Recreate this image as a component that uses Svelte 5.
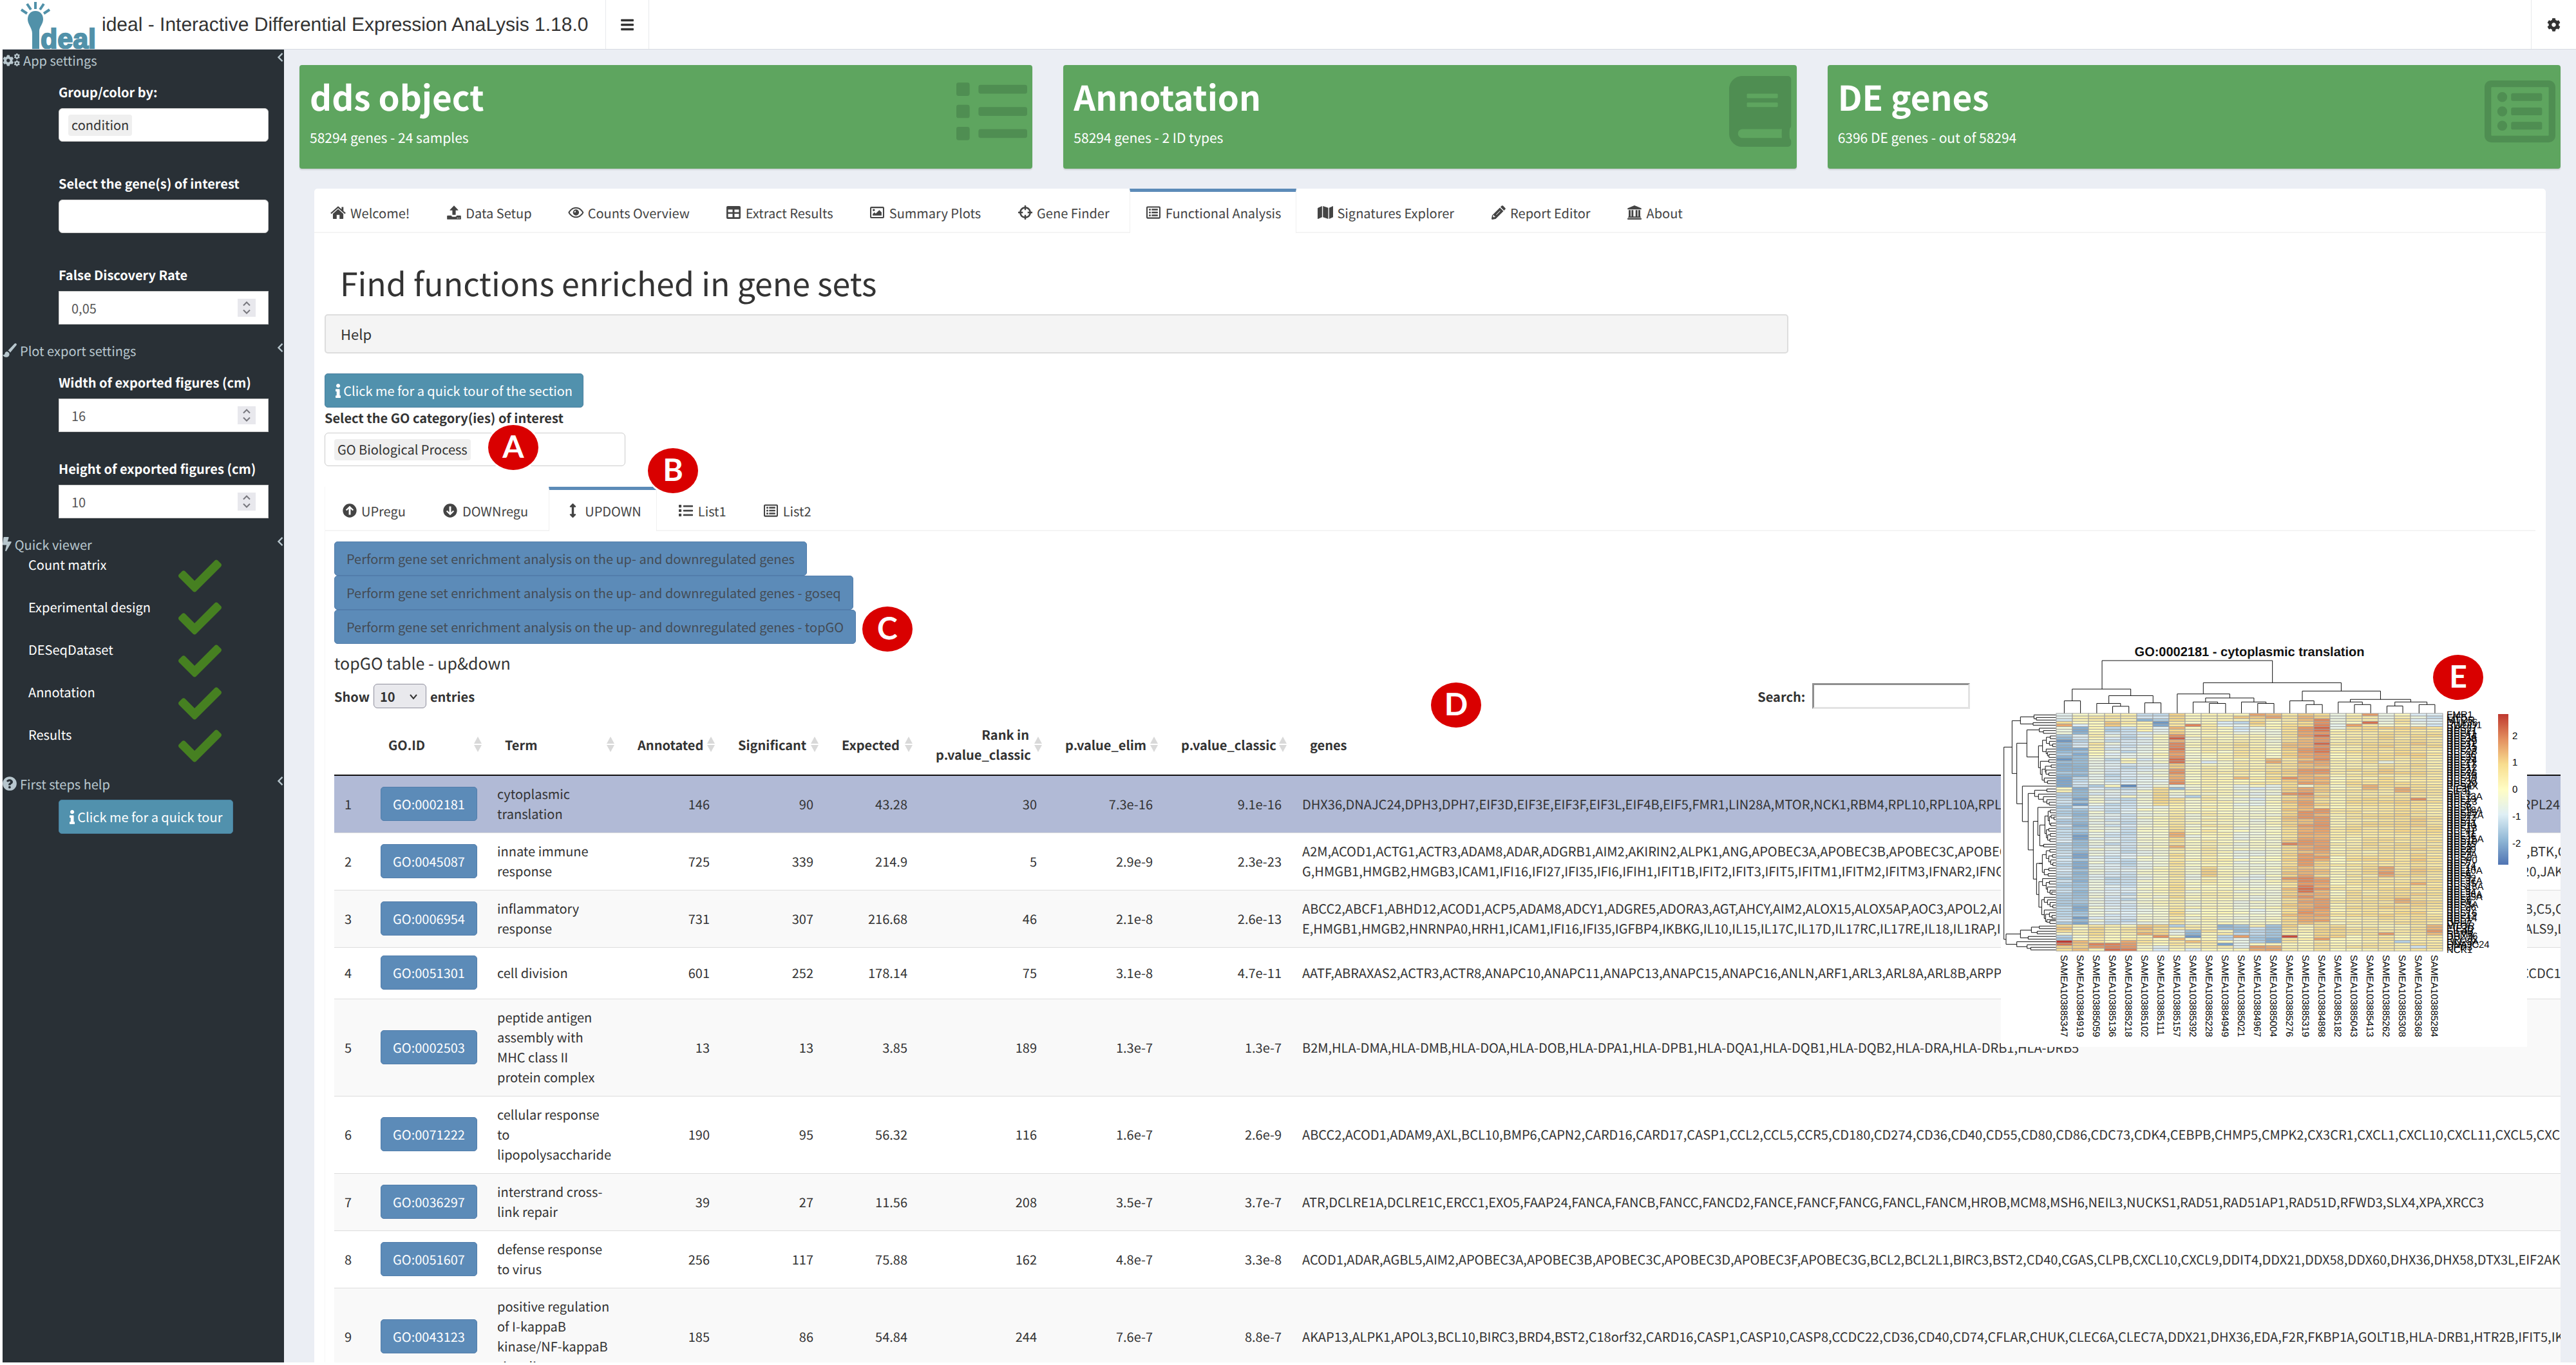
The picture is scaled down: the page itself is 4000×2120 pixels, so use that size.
<script>
  const cog = 'M487.4 315.7l-42.6-24.6c4.3-23.2 4.3-47 0-70.2l42.6-24.6c4.9-2.8 7.1-8.6 5.5-14-11.1-35.6-30-67.8-54.7-94.6-3.8-4.1-10-5.1-14.8-2.3L380.8 110c-17.9-15.4-38.5-27.3-60.8-35.1V25.8c0-5.6-3.9-10.5-9.4-11.7-36.7-8.2-74.3-7.8-109.2 0-5.5 1.2-9.4 6.1-9.4 11.7V75c-22.2 7.9-42.8 19.8-60.8 35.1L88.7 85.5c-4.9-2.8-11-1.9-14.8 2.3-24.7 26.7-43.6 58.9-54.7 94.6-1.7 5.4.6 11.2 5.5 14L67.3 221c-4.3 23.2-4.3 47 0 70.2l-42.6 24.6c-4.9 2.8-7.1 8.6-5.5 14 11.1 35.6 30 67.8 54.7 94.6 3.8 4.1 10 5.1 14.8 2.3l42.6-24.6c17.9 15.4 38.5 27.3 60.8 35.1v49.2c0 5.6 3.9 10.5 9.4 11.7 36.7 8.2 74.3 7.8 109.2 0 5.5-1.2 9.4-6.1 9.4-11.7v-49.2c22.2-7.9 42.8-19.8 60.8-35.1l42.6 24.6c4.9 2.8 11 1.9 14.8-2.3 24.7-26.7 43.6-58.9 54.7-94.6 1.5-5.5-.7-11.3-5.6-14.1zM256 336c-44.1 0-80-35.9-80-80s35.9-80 80-80 80 35.9 80 80-35.9 80-80 80z';
  const listAlt = 'M464 32H48C21 32 0 53 0 80v352c0 27 21 48 48 48h416c27 0 48-21 48-48V80c0-27-21-48-48-48zm-6 400H54c-3 0-6-3-6-6V86c0-3 3-6 6-6h404c3 0 6 3 6 6v340c0 3-3 6-6 6zM128 116a36 36 0 1 0 0 72a36 36 0 1 0 0-72zM128 220a36 36 0 1 0 0 72a36 36 0 1 0 0-72zM128 324a36 36 0 1 0 0 72a36 36 0 1 0 0-72zM204 124h200q12 0 12 12v32q0 12-12 12H204q-12 0-12-12v-32q0-12 12-12zM204 228h200q12 0 12 12v32q0 12-12 12H204q-12 0-12-12v-32q0-12 12-12zM204 332h200q12 0 12 12v32q0 12-12 12H204q-12 0-12-12v-32q0-12 12-12z';
  const list = 'M80 368H16a16 16 0 0 0-16 16v64a16 16 0 0 0 16 16h64a16 16 0 0 0 16-16v-64a16 16 0 0 0-16-16zm0-320H16A16 16 0 0 0 0 64v64a16 16 0 0 0 16 16h64a16 16 0 0 0 16-16V64a16 16 0 0 0-16-16zm0 160H16a16 16 0 0 0-16 16v64a16 16 0 0 0 16 16h64a16 16 0 0 0 16-16v-64a16 16 0 0 0-16-16zm416 176H176a16 16 0 0 0-16 16v32a16 16 0 0 0 16 16h320a16 16 0 0 0 16-16v-32a16 16 0 0 0-16-16zm0-320H176a16 16 0 0 0-16 16v32a16 16 0 0 0 16 16h320a16 16 0 0 0 16-16V80a16 16 0 0 0-16-16zm0 160H176a16 16 0 0 0-16 16v32a16 16 0 0 0 16 16h320a16 16 0 0 0 16-16v-32a16 16 0 0 0-16-16z';
  const icons = {
    cog: [512, cog],
    list: [512, list],
    listAlt: [512, listAlt],
    bars: [448, 'M20 60h408q16 0 16 16v48q0 16-16 16H20q-16 0-16-16V76q0-16 16-16zM20 216h408q16 0 16 16v48q0 16-16 16H20q-16 0-16-16v-48q0-16 16-16zM20 372h408q16 0 16 16v48q0 16-16 16H20q-16 0-16-16v-48q0-16 16-16z'],
    book: [448, 'M448 360V24c0-13.3-10.7-24-24-24H96C43 0 0 43 0 96v320c0 53 43 96 96 96h328c13.3 0 24-10.7 24-24v-16c0-7.5-3.5-14.3-8.9-18.7-4.2-15.4-4.2-59.3 0-74.7 5.4-4.3 8.9-11.1 8.9-18.6zM128 134c0-3.3 2.7-6 6-6h212c3.3 0 6 2.7 6 6v20c0 3.3-2.7 6-6 6H134c-3.3 0-6-2.7-6-6v-20zm0 64c0-3.3 2.7-6 6-6h212c3.3 0 6 2.7 6 6v20c0 3.3-2.7 6-6 6H134c-3.3 0-6-2.7-6-6v-20zm253.4 250H96c-17.7 0-32-14.3-32-32 0-17.6 14.4-32 32-32h285.4c-1.9 17.1-1.9 46.9 0 64z'],
    check: [512, 'M173.898 439.404l-166.4-166.4c-9.997-9.997-9.997-26.206 0-36.204l36.203-36.204c9.997-9.998 26.207-9.998 36.204 0L192 312.69 432.095 72.596c9.997-9.997 26.207-9.997 36.204 0l36.203 36.204c9.997 9.997 9.997 26.206 0 36.204l-294.4 294.401c-9.998 9.997-26.207 9.997-36.204-.001z'],
    bolt: [320, 'M296 160H180.6l42.6-129.8C227.2 15 215.7 0 200 0H56C44 0 33.8 8.9 32.2 20.8l-32 240C-1.7 275.2 9.5 288 24 288h118.7L96.6 482.5c-3.6 15.2 8 29.5 23.3 29.5 8.4 0 16.4-4.4 20.8-12l176-304c9.3-15.9-2.2-36-20.7-36z'],
    upDown: [256, 'M214.059 377.941H168V134.059h46.059c21.382 0 32.09-25.851 16.971-40.971L144.971 7.029c-9.373-9.373-24.568-9.373-33.941 0L24.971 93.088c-15.119 15.119-4.411 40.971 16.971 40.971H88v243.882H41.941c-21.382 0-32.09 25.851-16.971 40.971l86.059 86.059c9.373 9.373 24.568 9.373 33.941 0l86.059-86.059c15.12-15.119 4.412-40.971-16.97-40.971z'],
    info: [192, 'M20 424.229h20V279.771H20c-11.046 0-20-8.954-20-20V212c0-11.046 8.954-20 20-20h112c11.046 0 20 8.954 20 20v212.229h20c11.046 0 20 8.954 20 20V492c0 11.046-8.954 20-20 20H20c-11.046 0-20-8.954-20-20v-47.771c0-11.046 8.954-20 20-20zM96 0C56.235 0 24 32.235 24 72s32.235 72 72 72 72-32.235 72-72S135.764 0 96 0z'],
    home: [560, 'M280 30L4 272l34 38L280 98l242 212 34-38-84-74V56h-66v84zM92 300L280 136l188 164v170q0 16-16 16H332V346H228v140H108q-16 0-16-16z'],
    upload: [512, 'M256 4l150 160q8 14-8 16h-82v150q0 16-16 16h-88q-16 0-16-16V180h-82q-16-2-8-16zM24 366h136q8 44 48 46h96q40-2 48-46h136q20 2 20 22v100q0 20-20 20H24q-20 0-20-20V388q0-20 20-22zm340 74v32h30v-32zm60 0v32h30v-32z'],
    eye: [576, 'M288 62C150 62 50 166 8 256c42 90 142 194 280 194s238-104 280-194C526 166 426 62 288 62zm0 46c108 0 186 76 228 148-42 72-120 148-228 148S102 328 60 256c42-72 120-148 228-148zM288 146a110 110 0 1 0 0 220a110 110 0 1 0 0-220zm-10 44v60h-60c4-34 26-56 60-60z'],
    table: [512, 'M48 24h416q48 0 48 48v368q0 48-48 48H48q-48 0-48-48V72q0-48 48-48zM60 152v90h162V152zm230 0v90h162V152zM60 304v120h162V304zm230 0v120h162V304z'],
    image: [512, 'M48 48h416q48 0 48 48v320q0 48-48 48H48q-48 0-48-48V96q0-48 48-48zM48 96v320h416V96zM136 130a40 40 0 1 0 0 80a40 40 0 1 0 0-80zM96 368v-60l60-56 50 46 128-128 82 82v116z'],
    crosshairs: [512, 'M228 0h56v50C380 64 448 132 462 228h50v56h-50C448 380 380 448 284 462v50h-56v-50C132 448 64 380 50 284H0v-56h50C64 132 132 64 228 50zM228 108C166 120 120 166 108 228h62v56h-62c12 62 58 108 120 120v-62h56v62c62-12 108-58 120-120h-62v-56h62c-12-62-58-108-120-120v62h-56z'],
    map: [576, 'M0 116q0-20 18-28L160 24v400L18 486q-18 6-18-12zM192 24l192 66v398l-192-66zM416 88L558 26q18-6 18 12v358q0 20-18 28L416 488z'],
    pencil: [512, 'M498 142l-46 46L324 60l46-46q22-20 46 0l82 82q20 24 0 46zM302 82L22 362 0 484q0 28 28 26l122-22 280-280zM126 420l-50 10-26-26 10-50h34v38h38zm40-88l140-140 14 14-140 140z'],
    bank: [512, 'M256 0l250 104v40H6v-40zM48 168h68v232h32V168h68v232h80V168h68v232h32V168h68v232q22 2 22 40H26q0-38 22-40zM4 462h504v50H4z'],
    up: [512, 'M256 8a248 248 0 1 0 0 496a248 248 0 1 0 0-496zM256 88l142 138-36 36-72-70v214h-68V192l-72 70-36-36z'],
    down: [512, 'M256 8a248 248 0 1 0 0 496a248 248 0 1 0 0-496zM256 424l142-138-36-36-72 70V106h-68v214l-72-70-36 36z'],
    question: [512, 'M256 4a252 252 0 1 0 0 504a252 252 0 1 0 0-504zM250 98c-52 0-88 24-114 66l58 42c16-22 30-34 54-34 18 0 34 10 34 28 0 32-72 36-70 106v10h80c0-52 80-48 80-120 0-60-62-98-122-98zM254 344a44 44 0 1 0 0 88a44 44 0 1 0 0-88z'],
    brush: [512, 'M470 4c-18-4-32 4-44 18L196 268c36 14 64 40 78 76L498 76c24-34 6-66-28-72zM160 302c-60 4-74 48-82 86-10 38-46 32-74 24 12 64 68 96 130 96 72 0 120-52 112-122-10-46-44-76-86-84z'],
    chevron: [300, 'M220 60l44 44-150 152 150 152-44 44L24 256z']
  };

  const tabs = [
    ['home', 'Welcome!'], ['upload', 'Data Setup'], ['eye', 'Counts Overview'], ['table', 'Extract Results'],
    ['image', 'Summary Plots'], ['crosshairs', 'Gene Finder'], ['listAlt', 'Functional Analysis'],
    ['map', 'Signatures Explorer'], ['pencil', 'Report Editor'], ['bank', 'About']
  ];
  const subTabs = [['up', 'UPregu'], ['down', 'DOWNregu'], ['upDown', 'UPDOWN'], ['list', 'List1'], ['listAlt', 'List2']];
  const boxes = [
    ['dds object', '58294 genes - 24 samples', 'list'],
    ['Annotation', '58294 genes - 2 ID types', 'book'],
    ['DE genes', '6396 DE genes - out of 58294', 'listAlt']
  ];
  const checks = ['Count matrix', 'Experimental design', 'DESeqDataset', 'Annotation', 'Results'];
  const analysis = 'Perform gene set enrichment analysis on the up- and downregulated genes';
  const actions = [analysis, analysis + ' - goseq', analysis + ' - topGO'];
  const columns = ['', 'GO.ID', 'Term', 'Annotated', 'Significant', 'Expected', 'Rank in\np.value_classic', 'p.value_elim', 'p.value_classic', 'genes'];

  const rows = [
    ['GO:0002181', 'cytoplasmic\ntranslation', '146', '90', '43.28', '30', '7.3e-16', '9.1e-16', 'DHX36,DNAJC24,DPH3,DPH7,EIF3D,EIF3E,EIF3F,EIF3L,EIF4B,EIF5,FMR1,LIN28A,MTOR,NCK1,RBM4,RPL10,RPL10A,RPL11,RPL12,RPL13,RPL13A,RPL14,RPL15,RPL17,RPL18,RPL18A,RPL19,RPL3,RPL22,RPL23,RPL24,RPL26,RPL27'],
    ['GO:0045087', 'innate immune\nresponse', '725', '339', '214.9', '5', '2.9e-9', '2.3e-23', 'A2M,ACOD1,ACTG1,ACTR3,ADAM8,ADAR,ADGRB1,AIM2,AKIRIN2,ALPK1,ANG,APOBEC3A,APOBEC3B,APOBEC3C,APOBEC3D,APOBEC3F,APOBEC3G,APPL2,ARG1,ATG12,BCL10,BCL2L1,BIRC3,BMP6,BPIFB1,BST2,BTK,C1QA,C1QB\nG,HMGB1,HMGB2,HMGB3,ICAM1,IFI16,IFI27,IFI35,IFI6,IFIH1,IFIT1B,IFIT2,IFIT3,IFIT5,IFITM1,IFITM2,IFITM3,IFNAR2,IFNGR1,IFNGR2,IL12RB1,IL18R1,IL18RAP,IL1RAP,IL1RL2,IL27,IRAK2,IRF1,IRF5,IRF7,ISG15,ISG20,JAK2,KLRD1'],
    ['GO:0006954', 'inflammatory\nresponse', '731', '307', '216.68', '46', '2.1e-8', '2.6e-13', 'ABCC2,ABCF1,ABHD12,ACOD1,ACP5,ADAM8,ADCY1,ADGRE5,ADORA3,AGT,AHCY,AIM2,ALOX15,ALOX5AP,AOC3,APOL2,APOL3,APPL2,BCL6,BCR,BDKRB1,BDKRB2,BIRC3,BMP2,BMP6,BST1,BTK,C3,C3AR1,C4A,C4B,C5,C5AR1\nE,HMGB1,HMGB2,HNRNPA0,HRH1,ICAM1,IFI16,IFI35,IGFBP4,IKBKG,IL10,IL15,IL17C,IL17D,IL17RC,IL17RE,IL18,IL1RAP,IL1RL2,IL1RN,IL22RA1,IL27,IL36A,IL4R,IL6,IRAK2,IRF5,ITGAL,JAK2,JAM3,KIT,KNG1,LBP,LGALS9,LIAS,LTA'],
    ['GO:0051301', 'cell division', '601', '252', '178.14', '75', '3.1e-8', '4.7e-11', 'AATF,ABRAXAS2,ACTR3,ACTR8,ANAPC10,ANAPC11,ANAPC13,ANAPC15,ANAPC16,ANLN,ARF1,ARL3,ARL8A,ARL8B,ARPP19,ASPM,AURKA,AURKB,BABAM1,BCR,BIRC5,BORA,BRCA2,BUB1,BUB1B,CALM1,CALM2,CCDC124,CCNA1'],
    ['GO:0002503', 'peptide antigen\nassembly with\nMHC class II\nprotein complex', '13', '13', '3.85', '189', '1.3e-7', '1.3e-7', 'B2M,HLA-DMA,HLA-DMB,HLA-DOA,HLA-DOB,HLA-DPA1,HLA-DPB1,HLA-DQA1,HLA-DQB1,HLA-DQB2,HLA-DRA,HLA-DRB1,HLA-DRB5'],
    ['GO:0071222', 'cellular response\nto\nlipopolysaccharide', '190', '95', '56.32', '116', '1.6e-7', '2.6e-9', 'ABCC2,ACOD1,ADAM9,AXL,BCL10,BMP6,CAPN2,CARD16,CARD17,CASP1,CCL2,CCL5,CCR5,CD180,CD274,CD36,CD40,CD55,CD80,CD86,CDC73,CDK4,CEBPB,CHMP5,CMPK2,CX3CR1,CXCL1,CXCL10,CXCL11,CXCL5,CXCL8,CXCL9,DAB2IP'],
    ['GO:0036297', 'interstrand cross-\nlink repair', '39', '27', '11.56', '208', '3.5e-7', '3.7e-7', 'ATR,DCLRE1A,DCLRE1C,ERCC1,EXO5,FAAP24,FANCA,FANCB,FANCC,FANCD2,FANCE,FANCF,FANCG,FANCL,FANCM,HROB,MCM8,MSH6,NEIL3,NUCKS1,RAD51,RAD51AP1,RAD51D,RFWD3,SLX4,XPA,XRCC3'],
    ['GO:0051607', 'defense response\nto virus', '256', '117', '75.88', '162', '4.8e-7', '3.3e-8', 'ACOD1,ADAR,AGBL5,AIM2,APOBEC3A,APOBEC3B,APOBEC3C,APOBEC3D,APOBEC3F,APOBEC3G,BCL2,BCL2L1,BIRC3,BST2,CD40,CGAS,CLPB,CXCL10,CXCL9,DDIT4,DDX21,DDX58,DDX60,DHX36,DHX58,DTX3L,EIF2AK2,ELMOD2,EXOSC4'],
    ['GO:0043123', 'positive regulation\nof I-kappaB\nkinase/NF-kappaB\nsignaling', '185', '86', '54.84', '244', '7.6e-7', '8.8e-7', 'AKAP13,ALPK1,APOL3,BCL10,BIRC3,BRD4,BST2,C18orf32,CARD16,CASP1,CASP10,CASP8,CCDC22,CD36,CD40,CD74,CFLAR,CHUK,CLEC6A,CLEC7A,DDX21,DHX36,EDA,F2R,FKBP1A,GOLT1B,HLA-DRB1,HTR2B,IFIT5,IKBKE,IL12,IRAK1']
  ];

  /* Heatmap data: a base value per sample, with ranges of rows that differ. */
  const samples = ['5347', '4919', '5059', '5136', '5218', '5102', '5111', '5157', '5392', '5228', '4949', '5021', '4967', '5004', '5276', '5319', '4898', '5182', '5043', '5413', '5262', '5308', '5368', '5284'];
  const base = [-1.3, -1.9, -0.6, -1, -1.1, -0.4, -0.2, 0.6, -0.2, 0.2, 0, -0.4, -0.4, -0.2, 0.9, 1.5, 1.5, 0.2, 0.5, 0.6, 0.7, 0.7, 0.8, 0.5];
  const areas = [
    [0, 0, 2, -0.9], [0, 3, 3, 0.8], [0, 4, 4, 1.6], [0, 5, 7, -0.6], [0, 8, 27, -1.9], [0, 27, 27, -2.2], [0, 28, 29, -0.1], [0, 80, 82, 0.8], [0, 84, 85, -1.4], [0, 86, 86, 3], [0, 87, 87, 1.9], [0, 88, 89, 0.8],
    [1, 0, 3, 0.1], [1, 4, 4, -0.7], [1, 5, 7, -2.2], [1, 8, 12, -1.2], [1, 24, 27, -1], [1, 35, 35, -0.7], [1, 80, 85, 0], [1, 86, 89, 1.2],
    [2, 0, 15, 0.2], [2, 27, 27, -1.7], [2, 80, 86, 0.6], [2, 87, 88, 1.9], [2, 89, 89, 0.5],
    [3, 0, 2, 0.3], [3, 3, 4, 1.3], [3, 5, 6, -1.3], [3, 7, 20, -0.9], [3, 27, 27, 0.1], [3, 80, 86, 0.3], [3, 87, 89, 2],
    [4, 0, 4, 0.4], [4, 17, 18, 0], [4, 27, 27, -2.2], [4, 31, 31, 0], [4, 80, 85, 0.3], [4, 86, 87, 1.4], [4, 88, 89, 2],
    [5, 0, 2, -1], [5, 2, 2, -1.8], [5, 3, 6, 0.1], [5, 7, 27, -0.8], [5, 80, 83, 1.2], [5, 84, 87, 0.5],
    [6, 0, 2, -1.3], [6, 3, 4, -2], [6, 5, 7, -0.7], [6, 19, 26, -0.4], [6, 28, 34, 0.8], [6, 80, 83, 0.9], [6, 84, 84, 1.8], [6, 88, 89, -0.7],
    [7, 0, 2, 1], [7, 5, 7, 1.1], [7, 8, 26, 1.6], [7, 9, 9, 2.1], [7, 13, 13, 2.3], [7, 17, 18, 2.1], [7, 19, 20, 1.2], [7, 27, 27, -0.2], [7, 28, 28, -1.5], [7, 29, 31, -0.5], [7, 45, 46, 1.5], [7, 50, 50, 1.3], [7, 80, 80, -1.3], [7, 82, 83, -0.9], [7, 85, 85, 1.5],
    [8, 4, 4, 1.9], [8, 31, 31, -1.4], [8, 82, 84, -2], [8, 86, 86, 1.2], [8, 89, 89, -0.8],
    [9, 18, 18, -1], [9, 58, 61, 1], [10, 80, 81, -1.6], [10, 84, 85, -1.4], [10, 87, 87, -2.2], [10, 3, 4, -0.7],
    [11, 1, 1, 1.2], [11, 3, 6, -1], [11, 8, 26, 0.4], [11, 24, 24, 1.4], [11, 80, 83, -1.6], [11, 84, 84, 1.5], [11, 85, 88, -0.8],
    [12, 0, 0, 1.9], [12, 1, 4, 0.8], [12, 8, 27, 0.3], [12, 28, 33, -0.8], [12, 81, 86, -1.4], [12, 88, 89, 1.5],
    [13, 0, 1, 1.5], [13, 17, 18, 1.4], [13, 19, 26, 0.7], [13, 27, 28, -0.7], [13, 80, 86, -1.8], [13, 88, 89, 1.6],
    [14, 24, 24, 1.8], [14, 30, 30, 2], [14, 49, 49, 2], [14, 62, 62, 1.7], [14, 80, 81, 0.9], [14, 84, 84, 2.4], [14, 86, 89, 0.3],
    [15, 0, 4, 1.1], [15, 27, 27, 0.1], [15, 30, 30, 2.4], [15, 62, 67, 1.9], [15, 80, 89, 0.1],
    [16, 0, 1, 1.2], [16, 2, 17, 1.9], [16, 27, 35, 0.9], [16, 56, 61, 1], [16, 79, 84, 0.9], [16, 85, 85, 1.8],
    [17, 0, 5, -0.5], [17, 80, 84, 1], [18, 4, 4, 1.3], [19, 0, 0, 1.6], [19, 3, 3, 2], [19, 27, 28, 1.4], [20, 0, 4, -0.6], [20, 18, 18, -0.7], [20, 58, 61, 1.5], [20, 83, 83, 1.4],
    [21, 28, 29, 1.5], [21, 70, 71, 1.3], [21, 86, 86, -1.5], [22, 0, 4, -0.8], [22, 32, 32, 1.8], [22, 64, 64, 1.7], [22, 88, 88, -1.3],
    [23, 0, 4, -1], [23, 80, 83, 1.4], [23, 84, 89, 0.5]
  ];
  const stops = [[72, 116, 176], [143, 182, 212], [222, 238, 246], [253, 250, 192], [245, 216, 138], [226, 142, 94], [190, 56, 47]];
  let seed = 7;
  function noise() {
    seed = (seed * 16807) % 2147483647;
    return seed / 2147483647 - 0.5;
  }
  function colour(v) {
    const t = Math.max(0, Math.min(5.999, (v + 2.8) / 5.6 * 6));
    const i = Math.floor(t);
    const f = t - i;
    return 'rgb(' + stops[i].map((a, k) => Math.round(a + (stops[i + 1][k] - a) * f)).join(',') + ')';
  }
  const grid = [];
  for (let r = 0; r < 90; r++) {
    const rowShift = noise() * 0.3;
    for (let c = 0; c < 24; c++) {
      let v = base[c];
      if (r < 5 || r > 79) v = v * 0.3 + 0.2;
      for (const a of areas) if (a[0] === c && r >= a[1] && r <= a[2]) v = a[3];
      grid.push({ x: 86 + c * 25, y: 128 + r * 4.1, fill: colour(v + rowShift + noise() * 0.6) });
    }
  }
  const geneLabels = ['FMR1', 'EIF5', 'MTOR', 'DHX36', 'RWDD1', 'RPS27', 'RPS21', 'RPL41', 'RPS14', 'RPL38', 'RPS29', 'RPL31', 'RPS15', 'RPL23', 'RPS28', 'RPL36', 'RPL35', 'RPS24', 'RPL21', 'RPL17', 'RPS12', 'RPL27', 'RPS26', 'RPL39', 'RPS19', 'RPL30', 'RPS20', 'RPS4X', 'EIF3F', 'EIF3L', 'RPL3', 'RPL13A', 'RPL19', 'RPS23', 'RPL5', 'RPS8', 'RPL18A', 'RPS25', 'RPS27A', 'RPL22', 'RPS17', 'RPS11', 'RPL10', 'RPS13', 'RPL41', 'RPL11', 'RPL36', 'RPS15A', 'RPS10', 'RPL15', 'RPS3', 'RPL29', 'RPS9', 'RPL7A', 'RPS2', 'RPLP0', 'RPS7', 'RPL24', 'RPL14', 'RPL10A', 'RPL6', 'RPS5', 'RPL32', 'RPL37A', 'RPL35', 'RPS18A', 'RPL8', 'RPL34', 'RPL36A', 'RPL35A', 'RPS6', 'RPL4', 'RPS3A', 'RPL26', 'RPL9', 'RPS16', 'RPL12', 'RPS14', 'RPL7', 'DPH7', 'MTOR', 'EIF3D', 'EIF4B', 'RBM4', 'DHX36', 'RPL26', 'LIN28A', 'DNAJC24', 'DPH3', 'NCK1'];

  /* Sample tree: height, then x and end height of both branches. */
  const sampleTree = [
    [103, 312, 202, 763, 180], [202, 233, 243, 388, 225], [243, 212, 288, 255, 288], [225, 330, 252, 447, 250], [252, 298, 288, 361, 262],
    [262, 340, 288, 383, 288], [250, 425, 288, 468, 288], [180, 580, 219, 945, 209], [219, 511, 288, 650, 233], [233, 586, 247, 714, 247],
    [247, 553, 288, 618, 252], [252, 596, 288, 639, 288], [247, 681, 288, 746, 252], [252, 724, 288, 767, 288], [209, 842, 243, 1049, 238],
    [243, 809, 288, 873, 256], [256, 852, 288, 895, 288], [238, 969, 247, 1129, 247], [247, 937, 288, 1001, 256], [256, 980, 288, 1023, 288],
    [247, 1087, 261, 1172, 256], [261, 1066, 288, 1108, 288], [256, 1151, 288, 1193, 288]
  ];
  /* Gene tree: x, then y and end x of both branches. */
  const geneTree = [
    [2, 181, 40, 1077, 12], [40, 58, 79, 304, 62], [79, 40, 142, 73, 138], [142, 31, 245, 49, 153], [153, 43, 245, 55, 245], [138, 67, 245, 79, 245],
    [62, 163, 109, 445, 88], [109, 101, 167, 227, 163], [167, 93, 245, 110, 186], [186, 104, 245, 117, 245], [163, 175, 182, 277, 172],
    [182, 149, 200, 202, 199], [200, 135, 218, 164, 214], [218, 129, 245, 142, 245], [214, 154, 245, 172, 229], [229, 166, 245, 179, 245],
    [199, 190, 245, 212, 205], [205, 203, 245, 222, 212], [212, 215, 245, 229, 245], [172, 247, 211, 308, 180], [211, 240, 245, 252, 245],
    [180, 284, 195, 335, 190], [195, 270, 222, 298, 198], [222, 264, 245, 276, 245], [198, 288, 245, 307, 211], [211, 301, 245, 313, 245],
    [190, 325, 245, 345, 205], [205, 338, 245, 351, 245], [88, 363, 245, 528, 115], [115, 397, 145, 660, 139], [145, 382, 202, 411, 163],
    [202, 376, 245, 389, 245], [163, 400, 245, 424, 186], [186, 412, 245, 437, 202], [202, 426, 245, 445, 213], [213, 438, 245, 451, 245],
    [139, 527, 160, 796, 154], [160, 462, 245, 592, 169], [169, 544, 193, 641, 172], [172, 641, 187, 641, 187], [187, 634, 245, 646, 245],
    [193, 502, 208, 584, 200], [208, 480, 218, 524, 214], [218, 474, 245, 487, 245], [214, 505, 222, 541, 220], [222, 498, 245, 511, 235], [235, 507, 245, 519, 245],
    [220, 535, 245, 548, 245], [200, 566, 211, 604, 206], [211, 560, 245, 573, 245], [206, 590, 218, 615, 216], [218, 584, 245, 597, 245], [216, 609, 245, 621, 245],
    [154, 723, 165, 868, 165], [165, 723, 181, 723, 181], [181, 682, 199, 765, 190], [199, 664, 216, 700, 211], [216, 658, 245, 670, 245], [211, 688, 228, 716, 220],
    [228, 682, 245, 694, 245], [220, 707, 245, 728, 230], [230, 720, 245, 733, 245], [190, 751, 211, 776, 208], [211, 745, 245, 757, 245], [208, 770, 245, 782, 245],
    [165, 808, 182, 927, 178], [182, 794, 245, 826, 199], [199, 812, 214, 843, 205], [214, 806, 245, 819, 245], [205, 833, 245, 858, 217], [217, 848, 245, 866, 225],
    [225, 856, 245, 868, 245], [178, 892, 190, 962, 190], [190, 881, 245, 904, 205], [205, 893, 245, 915, 217], [217, 905, 245, 924, 230], [230, 917, 245, 930, 245],
    [190, 940, 245, 980, 196], [196, 960, 214, 994, 202], [214, 953, 245, 972, 226], [226, 965, 245, 978, 245], [202, 985, 245, 997, 216], [216, 990, 245, 1003, 245],
    [12, 1052, 79, 1100, 62], [79, 1034, 130, 1070, 115], [130, 1020, 167, 1045, 157], [167, 1015, 245, 1027, 245], [157, 1039, 245, 1051, 245],
    [115, 1063, 245, 1076, 245], [62, 1088, 245, 1111, 110], [110, 1102, 245, 1119, 127], [127, 1114, 245, 1126, 245]
  ];
  const sampleTreePath = sampleTree.map((b) => `M${b[1]} ${b[2]}V${b[0]}H${b[3]}V${b[4]}`).join('');
  const geneTreePath = geneTree.map((b) => `M${b[2]} ${b[1]}H${b[0]}V${b[3]}H${b[4]}`).join('');
  const ticks = [[2, 163], [1, 204], [0, 246], [-1, 288], [-2, 330]];
</script>

{#snippet icon(name)}
  <svg class="icon" viewBox="0 0 {icons[name][0]} 512" aria-hidden="true"><path fill-rule="evenodd" d={icons[name][1]} /></svg>
{/snippet}

{#snippet section(iconName, title)}
  <a class="section" href="#top">
    <span class="section-icon">{@render icon(iconName)}</span>{title}
    <span class="chev">{@render icon('chevron')}</span>
  </a>
{/snippet}

{#snippet number(id, label, value)}
  <div class="group">
    <label for={id}>{label}</label>
    <div class="field square">
      <input {id} type="text" inputmode="decimal" {value} />
      <span class="spin" aria-hidden="true">
        <svg viewBox="0 0 28 28"><path d="M9 10.500l5-5 5 5M9 17.500l5 5 5-5" /></svg>
      </span>
    </div>
  </div>
{/snippet}

<div class="app">
  <header>
    <div class="brand">
      <svg class="logo" viewBox="0 0 122 76" aria-label="ideal logo">
        <g fill="none" stroke="#5191a9" stroke-width="4">
          <path d="M24 3v11M11 6l6 9M37 6l-6 9M2 15l9 6M46 15l-9 6" />
        </g>
        <path fill="#5191a9" d="M24 17c-8 0-12 6-12 13 0 8 7 13 7 22v24h11V48c0-6 6-11 6-18 0-7-4-13-12-13z" />
        <text x="32" y="75" class="logo-text">deal</text>
      </svg>
      <span class="title">ideal - Interactive Differential Expression AnaLysis 1.18.0</span>
    </div>
    <button class="head-btn" aria-label="Toggle sidebar">{@render icon('bars')}</button>
    <button class="head-btn gear" aria-label="Settings">{@render icon('cog')}</button>
  </header>

  <div class="body">
    <aside>
      <a class="section" href="#top">
        <svg class="cogs" viewBox="0 0 700 512" aria-hidden="true">
          <g transform="translate(0 60) scale(.86)"><path d={cog} /></g>
          <g transform="translate(440 0) scale(.46)"><path d={cog} /></g>
          <g transform="translate(440 270) scale(.46)"><path d={cog} /></g>
        </svg>App settings
        <span class="chev">{@render icon('chevron')}</span>
      </a>
      <div class="form">
        <div class="group">
          <label for="group-by">Group/color by:</label>
          <div class="field"><span class="chip">condition</span><input id="group-by" type="text" /></div>
        </div>
        <div class="group">
          <label for="genes">Select the gene(s) of interest</label>
          <div class="field"><input id="genes" type="text" /></div>
        </div>
        {@render number('fdr', 'False Discovery Rate', '0,05')}
      </div>
      {@render section('brush', 'Plot export settings')}
      <div class="form tight">
        {@render number('fig-width', 'Width of exported figures (cm)', '16')}
        {@render number('fig-height', 'Height of exported figures (cm)', '10')}
      </div>
      {@render section('bolt', 'Quick viewer')}
      <ul class="checks">
        {#each checks as name}
          <li><span>{name}</span>{@render icon('check')}</li>
        {/each}
      </ul>
      {@render section('question', 'First steps help')}
      <button class="btn teal tour">{@render icon('info')}Click me for a quick tour</button>
    </aside>

    <main>
      <div class="boxes">
        {#each boxes as [title, text, ic]}
          <section class="box">
            <div><h3>{title}</h3><p>{text}</p></div>
            {@render icon(ic)}
          </section>
        {/each}
      </div>

      <div class="panel">
        <nav class="tabs top">
          {#each tabs as [ic, name]}
            <a href="#top" class:active={name === 'Functional Analysis'}><span class="fw">{@render icon(ic)}</span>{name}</a>
          {/each}
        </nav>
        <div class="pane">
          <h1>Find functions enriched in gene sets</h1>
          <button class="help">Help</button>
          <button class="btn teal">{@render icon('info')}Click me for a quick tour of the section</button>
          <label class="go-label" for="go">Select the GO category(ies) of interest</label>
          <div class="go">
            <div class="field bordered"><span class="chip">GO Biological Process</span><input id="go" type="text" /></div>
            <span class="badge a">A</span>
          </div>

          <div class="inner">
            <nav class="tabs sub">
              {#each subTabs as [ic, name]}
                <a href="#top" class:active={name === 'UPDOWN'}><span class="fw">{@render icon(ic)}</span>{name}</a>
              {/each}
              <span class="badge b">B</span>
            </nav>
            <div class="inner-pane">
              <div class="actions">
                {#each actions as text}
                  <button class="btn blue">{text}</button>
                {/each}
                <span class="badge c">C</span>
              </div>
              <h4>topGO table - up&amp;down</h4>
              <div class="controls">
                <label>Show <span class="select"><select><option>10</option><option>25</option></select><svg viewBox="0 0 14 10" aria-hidden="true"><path d="M2 2l5 6 5-6" /></svg></span> entries</label>
                <label>Search: <input class="search" type="search" /></label>
              </div>
              <div class="table-wrap">
                <table>
                  <colgroup><col class="w0" /><col class="w1" /><col class="w2" /><col class="w3" /><col class="w4" /><col class="w5" /><col class="w6" /><col class="w7" /><col class="w8" /><col /></colgroup>
                  <thead>
                    <tr>
                      {#each columns as name, i}
                        <th class:num={i > 2 && i < 9}>{name}{#if i > 0 && i < 9}<svg class="sort" viewBox="0 0 12 24" aria-hidden="true"><path d="M6 0l6 11H0zM6 24l6-11H0z" /></svg>{/if}</th>
                      {/each}
                    </tr>
                  </thead>
                  <tbody>
                    {#each rows as row, i}
                      <tr class:picked={i === 0}>
                        <td>{i + 1}</td>
                        <td><a class="btn blue id" href="#top">{row[0]}</a></td>
                        <td>{row[1]}</td>
                        {#each row.slice(2, 8) as value}<td class="num">{value}</td>{/each}
                        <td class="genes">{row[8]}</td>
                      </tr>
                    {/each}
                  </tbody>
                </table>
              </div>

              <svg class="heatmap" width="817" height="646" viewBox="0 0 817 646" role="img" aria-label="Heatmap of GO:0002181">
                <defs>
                  <linearGradient id="scale" x1="0" y1="1" x2="0" y2="0">
                    {#each ['#4f74b3', '#91b8d6', '#dfeff5', '#fffdc4', '#f8dd8f', '#e38f5f', '#bf382f'] as stop, i}
                      <stop offset={i / 6} stop-color={stop} />
                    {/each}
                  </linearGradient>
                </defs>
                <rect width="817" height="646" fill="#fff" />
                <text class="plot-title" x="386" y="39" text-anchor="middle">GO:0002181 - cytoplasmic translation</text>
                <g class="tree" transform="translate(-26 0) scale(.5867 .4464)"><path d={sampleTreePath} /></g>
                <g class="tree" transform="translate(4 120) scale(.3333)"><path d={geneTreePath} /></g>
                <g class="cells">
                  {#each grid as cell}<rect x={cell.x} y={cell.y} width="25" height="4.1" fill={cell.fill} />{/each}
                </g>
                {#each geneLabels as name, i}<text class="plot-label" x="692" y={135 + i * 4.1}>{name}</text>{/each}
                {#each samples as name, i}<text class="plot-label" transform="translate({93 + i * 25} 503) rotate(90)">SAMEA10388{name}</text>{/each}
                <rect x="772" y="129" width="16" height="234" fill="url(#scale)" />
                {#each ticks as [name, y]}<text class="plot-label" x="794" y={y + 5}>{name}</text>{/each}
              </svg>
              <span class="badge d">D</span>
              <span class="badge e">E</span>
            </div>
          </div>
        </div>
      </div>
    </main>
  </div>
</div>

<style>
  :global(body) { background: #fff; }
  .app, .app * { box-sizing: border-box; }
  .app {
    height: 100vh; padding: 0 0 4px 4px; overflow: hidden; display: flex; flex-direction: column;
    font: 20px/31px "Noto Sans CJK JP", "Open Sans", sans-serif; color: #333; text-rendering: geometricPrecision;
  }
  button, input, select { font: inherit; color: inherit; }
  a { color: inherit; text-decoration: none; }
  .icon { height: 22px; fill: currentColor; flex: none; display: block; }
  h1, h3, h4, p, ul { margin: 0; padding: 0; font-weight: 400; }

  header { height: 77px; flex: none; display: flex; border-bottom: 1px solid #d8dbe2; background: #fff; }
  .brand { width: 936px; padding-left: 27px; display: flex; align-items: flex-start; }
  .logo { width: 122px; height: 76px; flex: none; }
  .logo-text { font: bold 43px "Liberation Sans", Arial, sans-serif; fill: #5191a9; stroke: #5191a9; stroke-width: 2px; }
  .title { margin-left: 5px; font: 30px/78px "Liberation Sans", Arial, sans-serif; white-space: nowrap; }
  .head-btn { width: 68px; border: 0; border-left: 1px solid #e8e9ec; border-right: 1px solid #e8e9ec; background: none; display: flex; align-items: center; justify-content: center; padding: 0; }
  .head-btn .icon { height: 23px; }
  .head-btn.gear { margin-left: auto; width: 70px; border-right: 0; }
  .head-btn.gear .icon { height: 21px; }

  .body { flex: 1; min-height: 0; display: flex; }
  aside { width: 437px; flex: none; background: #293036; color: #fff; }
  .section { height: 32px; margin-top: 24px; display: flex; align-items: center; color: #b8c7ce; }
  .section:first-child { margin-top: 0; }
  .checks + .section { margin-top: 10px; }
  .section-icon { margin-right: 5px; }
  .cogs { width: 28px; height: 22px; margin-right: 4px; fill: currentColor; }
  .chev { margin-left: auto; align-self: flex-start; padding-top: 3px; }
  .chev .icon { height: 18px; }
  .form { padding: 18px 24px 0 87px; display: flex; flex-direction: column; gap: 49px; }
  .form.tight { gap: 41px; }
  .group { display: flex; flex-direction: column; gap: 10px; }
  label { font-weight: 700; }
  .field { height: 52px; border: 1px solid #ccc; border-radius: 6px; background: #fff; color: #333; display: flex; align-items: center; padding: 0 14px; }
  .field.square { border-radius: 0; padding: 0 19px; color: #555; }
  .field input { flex: 1; min-width: 0; width: 0; border: 0; padding: 0; background: none; outline: 0; height: 100%; }
  .chip { background: #efefef; border-radius: 4px; padding: 0 5px; height: 33px; line-height: 32px; white-space: nowrap; }
  .spin { width: 28px; height: 28px; background: #e8e8ed; }
  .spin svg { display: block; fill: none; stroke: #77777d; stroke-width: 2; }
  .checks { list-style: none; padding: 0 97px 0 40px; }
  .checks li { height: 66px; display: flex; justify-content: space-between; }
  .checks .icon { height: 67px; width: 67px; fill: #468021; }

  .btn { display: inline-flex; align-items: center; height: 53px; padding: 0 20px; border: 1px solid; border-radius: 5px; white-space: nowrap; }
  .teal { background: #5191ad; border-color: #487f9e; color: #fff; gap: 4px; padding: 0 16px; }
  .blue { background: #5c8bb8; border-color: #527dab; color: #444c55; padding: 0 18px; }
  .id { color: #fff; width: 150px; justify-content: center; padding: 0; }
  .tour { margin: 9px 0 0 87px; }

  main { flex: 1; min-width: 0; background: #ebeef4; padding: 24px 24px 0; overflow: hidden; }
  .boxes { display: flex; gap: 48px; }
  .box { flex: 1; height: 161px; border-radius: 4px; background: #5ea55f; color: #fff; display: flex; justify-content: space-between; align-items: flex-start; padding: 17px 7px 0 16px; box-shadow: 0 2px 2px rgba(0, 0, 0, .12); }
  .box h3 { font-size: 53px; line-height: 64px; font-weight: 700; }
  .box p { font-size: 21px; margin-top: 17px; }
  .box .icon { height: 110px; fill: #4f8e52; margin-right: 1px; }

  .panel { margin: 31px 23px 0; background: #fff; border-radius: 5px 5px 0 0; }
  .tabs { height: 69px; display: flex; gap: 8px; border-bottom: 2px solid #f4f4f4; }
  .tabs.top { gap: 7px; }
  .tabs a { display: flex; align-items: center; height: 69px; padding: 5px 23px 0; gap: 5px; color: #444; border-left: 1px solid transparent; border-right: 1px solid transparent; white-space: nowrap; }
  .tabs a.active { border-top: 5px solid #5c8bb8; padding-top: 0; border-left-color: #f0f0f0; border-right-color: #f0f0f0; background: #fff; }
  .fw { width: 27px; display: flex; justify-content: center; }
  .pane { padding: 49px 16px 0; display: flex; flex-direction: column; align-items: flex-start; }
  h1 { font-size: 50px; line-height: 56px; margin: 0 0 21px 24px; }
  .help { width: calc(66.667% - 16px); height: 61px; background: #f4f4f4; border: 2px solid #ddd; border-radius: 5px; text-align: left; padding: 0 23px; font-size: 22px; margin-bottom: 31px; }
  .go-label { margin-bottom: 8px; }
  .go { width: 467px; position: relative; margin-bottom: 32px; }
  .inner { align-self: stretch; border-left: 1px solid #f7f7f7; }
  .sub { position: relative; }
  .inner-pane { padding: 16px 15px 0 14px; position: relative; }
  .actions { display: flex; flex-direction: column; align-items: flex-start; position: relative; }
  h4 { font-size: 25px; line-height: 31px; margin-top: 15px; }
  .controls { margin-top: 15px; width: calc(75% - 12px); height: 40px; display: flex; justify-content: space-between; align-items: center; }
  .controls label { display: flex; align-items: center; gap: 6px; }
  .controls label + label { gap: 11px; }
  .select { position: relative; display: flex; }
  .select svg { position: absolute; right: 13px; top: 15px; width: 14px; fill: none; stroke: #333; stroke-width: 2; }
  select { appearance: none; width: 82px; height: 38px; border: 1px solid #8f8f9d; border-radius: 6px; background: #e9e9ed; padding: 0 9px; font-weight: 700; }
  .search { width: 245px; height: 40px; border: 3px solid; border-color: #8f8f8f #e3e3e3 #e3e3e3 #8f8f8f; background: #fff; padding: 0 4px; }

  .table-wrap { margin: 8px -54px 0 0; overflow: hidden; }
  table { width: 100%; table-layout: fixed; border-collapse: separate; border-spacing: 0; }
  .w0 { width: 56px; } .w1 { width: 181px; } .w2 { width: 206px; } .w3 { width: 156px; } .w4 { width: 161px; }
  .w5 { width: 146px; } .w6 { width: 201px; } .w7 { width: 180px; } .w8 { width: 200px; }
  th { position: relative; text-align: left; padding: 16px 28px; border-bottom: 2px solid #111; white-space: pre; font-weight: 700; }
  .num { text-align: right; }
  .sort { position: absolute; right: 8px; top: 35px; width: 12px; height: 24px; fill: #d9d9d9; }
  td { padding: 12px 16px 14px; border-top: 1px solid #ddd; white-space: pre; background: #fff; }
  tr:first-child td { border-top: 0; }
  tr:nth-child(odd) td { background: #f9f9f9; }
  tr.picked td { background: #b1bad6; }
  td .btn { display: flex; }
  .genes { overflow: hidden; padding-right: 0; }

  .heatmap { position: absolute; left: 2602px; top: 155px; display: block; overflow: hidden; font-family: "Liberation Sans", Arial, sans-serif; }
  .plot-title { font-size: 20px; font-weight: 700; fill: #111; }
  .plot-label { font-size: 15px; fill: #000; }
  .tree path { fill: none; stroke: #111; stroke-width: 1px; vector-effect: non-scaling-stroke; }
  .cells rect { stroke: #a0a0a0; stroke-width: 1px; }

  .badge { position: absolute; width: 84px; height: 76px; border: 3px solid #fff; border-radius: 50%; background: #d90000; color: #fff; font: 700 48px/68px Lato, sans-serif; text-align: center; }
  .badge.a { left: 251px; top: -15px; }
  .badge.b { left: 498px; top: -63px; }
  .badge.c { left: 817px; top: 98px; }
  .badge.d { left: 1714px; top: 232px; }
  .badge.e { left: 3270px; top: 189px; }
</style>
